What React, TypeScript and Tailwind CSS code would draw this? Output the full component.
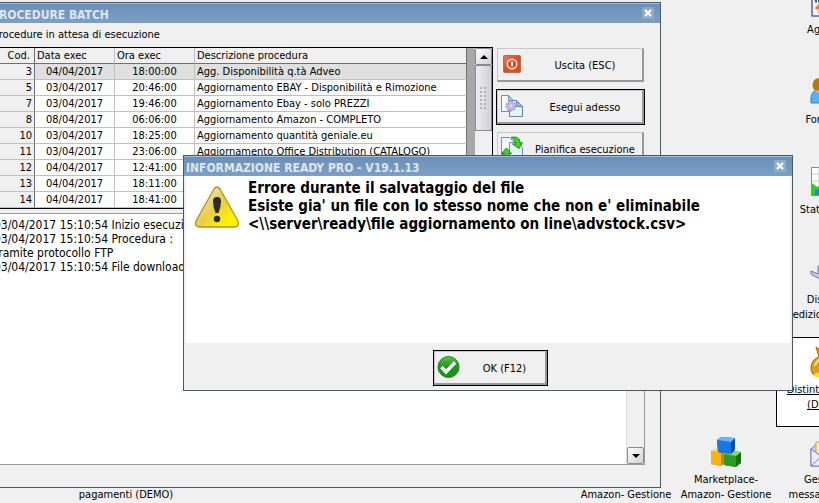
import React from "react";

const desktopItems = [
  { lines: ["Agenda"], icon: "calendar", cell: "col-start-9 row-start-1" },
  { lines: ["Fornitori"], icon: "person", cell: "col-start-9 row-start-2" },
  { lines: ["Statistiche"], icon: "chart", cell: "col-start-9 row-start-3" },
  {
    lines: ["Distinte", "Spedizioni (DEMO)"],
    icon: "plane",
    cell: "col-start-9 row-start-4",
  },
  {
    lines: ["Distinte incasso", "(DEMO)"],
    icon: "moneybag",
    cell: "col-start-9 row-start-5",
    selected: true,
  },
  {
    lines: ["Gestione", "messaggi Ebay"],
    icon: "mail",
    cell: "col-start-9 row-start-6",
  },
  {
    lines: ["Marketplace-", "Amazon- Gestione"],
    icon: "cubes",
    cell: "col-start-8 row-start-6",
  },
  {
    lines: ["\u00a0", "Amazon- Gestione"],
    cell: "col-start-7 row-start-6",
  },
  { lines: ["\u00a0", "pagamenti (DEMO)"], cell: "col-start-2 row-start-6" },
];

const procedures = [
  { code: 3, date: "04/04/2017", time: "18:00:00", description: "Agg. Disponibilità q.tà Adveo" },
  { code: 5, date: "03/04/2017", time: "20:46:00", description: "Aggiornamento EBAY - Disponibilità e Rimozione" },
  { code: 7, date: "03/04/2017", time: "19:46:00", description: "Aggiornamento Ebay - solo PREZZI" },
  { code: 8, date: "08/04/2017", time: "06:06:00", description: "Aggiornamento Amazon - COMPLETO" },
  { code: 10, date: "03/04/2017", time: "18:25:00", description: "Aggiornamento quantità geniale.eu" },
  { code: 11, date: "03/04/2017", time: "23:06:00", description: "Aggiornamento Office Distribution (CATALOGO)" },
  { code: 12, date: "04/04/2017", time: "12:41:00", description: "" },
  { code: 13, date: "04/04/2017", time: "18:11:00", description: "" },
  { code: 14, date: "04/04/2017", time: "18:41:00", description: "" },
];

const log = [
  "03/04/2017 15:10:54 Inizio esecuzione",
  "03/04/2017 15:10:54 Procedura :",
  "tramite protocollo FTP",
  "03/04/2017 15:10:54 File download",
].join("\n");

export default function App() {
  return (
    <div className="relative h-screen overflow-hidden bg-[#f0f0f0] font-['DejaVu_Sans_Condensed','DejaVu_Sans',sans-serif] text-[11px] text-black">
      <Desktop />
      <BatchWindow />
      <ErrorDialog />
    </div>
  );
}

const Desktop = () => {
  return (
    <div className="-mt-[23px] -ml-6 grid auto-rows-[90px] grid-cols-[repeat(9,100px)]">
      {desktopItems.map((item) => (
        <button
          key={item.cell}
          className={`flex flex-col items-center border pt-2 leading-[15px] ${item.cell} ${
            item.selected ? "border-black bg-white underline" : "border-transparent"
          }`}
        >
          <span className="mb-1 flex h-8 w-8 shrink-0 items-center justify-center">
            {item.icon && <DesktopIcon name={item.icon} />}
          </span>
          {item.lines.map((line) => (
            <span key={line} className="whitespace-nowrap">
              {line}
            </span>
          ))}
        </button>
      ))}
    </div>
  );
};

const TitleBar = ({ title }: { title: string }) => {
  return (
    <div className="flex h-5 shrink-0 items-center justify-between border-t border-[#a4c0d8] bg-linear-to-b from-[#6b90b8] to-[#7d9fc4] pr-1.5 pl-0.5">
      <h2 className="pt-0.5 text-xs font-bold whitespace-nowrap text-[#dfe6ee]">
        {title}
      </h2>
      <button
        aria-label="Chiudi"
        className="mb-0.5 flex h-3 w-3 items-center justify-center bg-[#8dacca]"
      >
        <svg viewBox="0 0 8 8" className="h-2 w-2">
          <path d="M1 1l6 6M7 1L1 7" stroke="#fff" strokeWidth="2.2" />
        </svg>
      </button>
    </div>
  );
};

const BatchWindow = () => {
  return (
    <section className="absolute top-[2px] right-[158px] bottom-[15px] -left-[12px] flex flex-col border border-[#4b5866] bg-[#f0f0f0]">
      <TitleBar title="PROCEDURE BATCH" />
      <p className="mt-0.5 mb-0.5 pl-1 leading-5">Procedure in attesa di esecuzione</p>
      <div className="flex h-[162px] shrink-0 pr-[15px]">
        <div className="flex min-w-0 flex-1 border border-black bg-[#a8a8a8]">
          <ProcedureTable />
          <div className="ml-2 flex w-[17px] shrink-0 flex-col bg-[#f0f0f0]">
            <ScrollButton label="Scorri in alto" path="M0 4l4-4 4 4z" />
            <div className="flex h-[66px] items-center justify-center border border-[#8a8a92] bg-linear-to-r from-[#eeeef2] to-[#cfcfd6]">
              <svg viewBox="0 0 7 22" className="h-[22px] w-[7px]" fill="#b4b4bc">
                {[0, 4, 8, 12, 16, 20].map((y) => (
                  <React.Fragment key={y}>
                    <rect x="0" y={y} width="2" height="2" />
                    <rect x="4" y={y} width="2" height="2" />
                  </React.Fragment>
                ))}
              </svg>
            </div>
          </div>
        </div>
        <div className="ml-[3px] flex w-[149px] shrink-0 flex-col gap-1.5">
          <PushButton label="Uscita (ESC)" icon={<PowerIcon />} />
          <PushButton label="Esegui adesso" icon={<RunIcon />} focused />
          <PushButton label="Pianifica esecuzione" icon={<ScheduleIcon />} />
        </div>
      </div>
      <div className="mt-1 mr-[15px] mb-[22px] flex min-h-0 flex-1 border border-[#999] bg-white">
        <textarea
          aria-label="Registro esecuzione"
          readOnly
          value={log}
          className="min-w-0 flex-1 resize-none overflow-hidden pt-1 pl-1 text-xs leading-[14px] whitespace-pre outline-none"
        />
        <div className="flex w-[18px] shrink-0 flex-col justify-end border-l border-[#ddd] bg-[#f0f0f0]">
          <ScrollButton label="Scorri in basso" path="M0 0l4 4 4-4z" />
        </div>
      </div>
    </section>
  );
};

const ProcedureTable = () => {
  return (
    <table className="min-w-0 flex-1 table-fixed border-separate border-spacing-0 bg-white">
      <colgroup>
        <col className="w-[45px]" />
        <col className="w-20" />
        <col className="w-20" />
        <col />
      </colgroup>
      <thead>
        <tr className="h-4 bg-[#f0f0f0] text-left leading-[15px]">
          <th className="border-r border-b border-[#707070] pr-1 text-right font-normal">Cod.</th>
          <th className="border-r border-b border-r-[#c0c0c0] border-b-[#707070] pl-0.5 font-normal">Data exec</th>
          <th className="border-r border-b border-r-[#c0c0c0] border-b-[#707070] pl-0.5 font-normal">Ora exec</th>
          <th className="border-r border-b border-[#707070] pl-0.5 font-normal">Descrizione procedura</th>
        </tr>
      </thead>
      <tbody>
        {procedures.map((procedure, index) => (
          <tr
            key={procedure.code}
            className={`h-4 leading-[15px] ${index === 0 ? "bg-[#e0e0e0]" : "bg-white"}`}
          >
            <td className="border-r border-b border-r-[#707070] border-b-[#c0c0c0] bg-[#f0f0f0] pr-0.5 text-right">
              {procedure.code}
            </td>
            <td className="border-r border-b border-[#c0c0c0] text-center">{procedure.date}</td>
            <td className="border-r border-b border-[#c0c0c0] text-center">{procedure.time}</td>
            <td className="overflow-hidden border-r border-b border-r-[#707070] border-b-[#c0c0c0] pl-0.5 whitespace-nowrap">
              {procedure.description}
            </td>
          </tr>
        ))}
      </tbody>
    </table>
  );
};

const ScrollButton = ({ label, path }: { label: string; path: string }) => {
  return (
    <button
      aria-label={label}
      className="flex h-[17px] w-[17px] shrink-0 items-center justify-center rounded-xs border border-[#8a8a92] bg-linear-to-br from-white to-[#d0d0d6]"
    >
      <svg viewBox="0 0 8 4" className="h-1 w-2">
        <path d={path} />
      </svg>
    </button>
  );
};

const PushButton = ({
  label,
  icon,
  focused,
}: {
  label: string;
  icon: React.ReactNode;
  focused?: boolean;
}) => {
  return (
    <button
      className={`flex h-9 w-full shrink-0 items-center border bg-[#f0f0f0] ${
        focused ? "border-black" : "border-transparent"
      }`}
    >
      <span className="flex h-full w-full items-center border-t border-r-2 border-b-2 border-l border-t-[#c8c8cc] border-r-[#98989c] border-b-[#98989c] border-l-[#c8c8cc] pl-0.5">
        <span className="mb-0.5 flex h-6 w-6 shrink-0 items-center justify-center">
          {icon}
        </span>
        <span className="flex-1 pt-1 pl-1 text-center whitespace-nowrap">{label}</span>
      </span>
    </button>
  );
};

const ErrorDialog = () => {
  return (
    <section
      role="dialog"
      aria-label="Informazione"
      className="absolute top-[155px] right-[26px] left-[183px] flex flex-col border border-[#4b5866] bg-[#f0f0f0]"
    >
      <TitleBar title="INFORMAZIONE READY PRO - V19.1.13" />
      <div className="mx-0.5 flex h-[167px] bg-white pt-[3px]">
        <WarningIcon />
        <p className="ml-2 text-[15px] leading-[18px] font-bold whitespace-nowrap">
          Errore durante il salvataggio del file
          <br />
          Esiste gia' un file con lo stesso nome che non e' eliminabile
          <br />
          &lt;\\server\ready\file aggiornamento on line\advstock.csv&gt;
        </p>
      </div>
      <div className="flex justify-center pt-[7px] pb-1">
        <div className="ml-1 w-[115px]">
          <PushButton label="OK (F12)" icon={<OkIcon />} focused />
        </div>
      </div>
    </section>
  );
};

const WarningIcon = () => (
  <svg viewBox="0 0 46 42" className="mt-[7px] ml-2 h-[42px] w-[46px] shrink-0">
    <defs>
      <linearGradient id="warn" x1="0" y1="0" x2="1" y2="1">
        <stop offset="0.2" stopColor="#e9dfae" />
        <stop offset="0.5" stopColor="#e6cf45" />
        <stop offset="0.8" stopColor="#fff200" />
      </linearGradient>
    </defs>
    <path
      d="M20 3Q23-1 26 3L44 35Q46 40 41 41H5Q0 40 2 35Z"
      fill="url(#warn)"
      stroke="#bd8d1d"
      strokeWidth="1.3"
    />
    <path d="M19 15Q19 11 23 11T27 15Q27 21 24.5 27H21.5Q19 21 19 15Z" fill="#2b2b24" />
    <circle cx="23" cy="33" r="3.2" fill="#2b2b24" />
  </svg>
);

const OkIcon = () => (
  <svg viewBox="0 0 24 24" className="h-6 w-6">
    <defs>
      <linearGradient id="ok" x1="0" y1="0" x2="0" y2="1">
        <stop offset="0" stopColor="#5fc04c" />
        <stop offset="0.5" stopColor="#1d9420" />
        <stop offset="1" stopColor="#0d9b10" />
      </linearGradient>
    </defs>
    <circle cx="11.5" cy="12" r="10.5" fill="url(#ok)" stroke="#2c7a28" />
    <path d="M4.5 12l4.500 5 9-9.500" fill="none" stroke="#fff" strokeWidth="3.4" />
  </svg>
);

const PowerIcon = () => (
  <svg viewBox="0 0 18 18" className="h-[18px] w-[18px]">
    <defs>
      <linearGradient id="power" x1="0" y1="0" x2="1" y2="1">
        <stop offset="0" stopColor="#d98068" />
        <stop offset="0.5" stopColor="#dd4823" />
        <stop offset="1" stopColor="#f04a18" />
      </linearGradient>
    </defs>
    <rect x="0.5" y="0.5" width="17" height="17" rx="1" fill="url(#power)" stroke="#c0694f" />
    <circle cx="9" cy="9" r="4.8" fill="none" stroke="#fbe6dc" strokeWidth="1.5" />
    <path d="M9 6.500v5" stroke="#fff" strokeWidth="1.7" />
  </svg>
);

const RunIcon = () => (
  <svg viewBox="0 0 24 24" className="h-6 w-6">
    <path d="M1.5 1.5h7l5 5v11h-12z" fill="#f5f9ff" stroke="#6d8fbe" />
    <path d="M8.5 1.5v5h5z" fill="#a9cdf0" stroke="#6d8fbe" />
    <path d="M9.5 6.5h7l6 6v10h-13z" fill="#e7f1fd" stroke="#5f86bd" />
    <path d="M16.5 6.5v6h6z" fill="#8dbdec" stroke="#5f86bd" />
    <circle cx="11" cy="12" r="4.6" fill="#bdbcdc" stroke="#a3a1c6" strokeWidth="1.6" strokeDasharray="2 1" />
    <circle cx="11" cy="12" r="1.4" fill="#dcdcf2" />
  </svg>
);

const ScheduleIcon = () => (
  <svg viewBox="0 0 24 24" className="h-6 w-6">
    <path d="M1.5 1.5h8l5 5v12h-13z" fill="#f5f9ff" stroke="#6d8fbe" />
    <path d="M9.5 6.5h8l5 5v11h-13z" fill="#e7f1fd" stroke="#6d8fbe" />
    <path d="M11 1.5c6-1.500 9 1 9 5.500l2.500-.500-3.500 6-6.500-4.500h3c0-3-2-5-4.500-6.500z" fill="#47cf2c" stroke="#1f8d16" />
    <path d="M6.5 12l5 5.500H9V23H4v-5.500H1.500z" fill="#3ed028" stroke="#1f8d16" />
  </svg>
);

const DesktopIcon = ({ name }: { name: string }) => {
  return (
    <svg viewBox="0 0 32 32" className="h-8 w-8">
      {name === "calendar" && (
        <>
          <rect x="2" y="2" width="27" height="28" fill="#f4f4ff" stroke="#5f5fae" strokeWidth="1.5" />
          <path d="M5 15h21" stroke="#555" strokeWidth="3" strokeDasharray="2 1" />
          <path d="M6 23l4-4v9" fill="none" stroke="#ee7a1c" strokeWidth="3" />
        </>
      )}
      {name === "person" && (
        <>
          <path d="M1 27V21q1-6 6-7h13q7 2 8 13z" fill="#58b0f5" stroke="#2386d8" />
          <circle cx="11" cy="10" r="7.5" fill="#fbb45c" />
          <path d="M3 12Q1 2 11 2q9 0 9 7-8-2-11 1v4q-4 2-6-2z" fill="#b27a10" />
        </>
      )}
      {name === "chart" && (
        <>
          <rect x="1.5" y="1.5" width="29" height="28" fill="#fff" stroke="#8a8a98" />
          <path d="M2 8h28M2 15h28M9 2v27M17 2v27" stroke="#c9c9d6" />
          <path d="M2 17l5 4 5-3v12H2z" fill="#2fce2b" />
          <path d="M5 24l5-1v6H5z" fill="#2781dd" />
        </>
      )}
      {name === "plane" && (
        <path d="M1 15l7 3V10h4v9l16 3v4l-16-2-10-5q-2-2-1-4z" fill="#c9c9e6" stroke="#77779f" />
      )}
      {name === "moneybag" && (
        <>
          <path d="M6 1l6 4 4-3 3 3-5 6q13 6 12 14-2 7-14 6Q0 31 1 21q1-8 8-10z" fill="#dc9c1c" stroke="#a46b05" />
          <path d="M5 20q1-5 6-7" fill="none" stroke="#ffdf7d" strokeWidth="2" />
          <ellipse cx="9" cy="29" rx="5" ry="2.5" fill="#ffdf1c" />
        </>
      )}
      {name === "mail" && (
        <>
          <path d="M1 13L13 2l17 11v17H1z" fill="#c9c9fa" stroke="#7878c8" />
          <path d="M6 6h20v16H6z" fill="#ffe9b5" stroke="#caa870" />
          <path d="M1 13l14 10 15-10v17H1z" fill="#ededff" stroke="#7878c8" />
          <path d="M1 30l11-10" stroke="#7878c8" />
        </>
      )}
      {name === "cubes" && (
        <>
          <path d="M1 15l3-2 10 1v14l-3 2-10-2z" fill="#c98705" />
          <path d="M1 15l10 1v14l-10-2z" fill="#f5b414" />
          <path d="M1 15l3-2 10 1-3 2z" fill="#ffe27a" />
          <path d="M14 18l4-3 13 1v11l-5 4-12-2z" fill="#14720f" />
          <path d="M14 18l12 2v11l-12-2z" fill="#2b9c22" />
          <path d="M14 18l4-3 13 1-5 4z" fill="#7ede65" />
          <path d="M7 4l4-3 14 1v12l-4 4-13-2z" fill="#0b4fae" />
          <path d="M7 4l14 2v12l-13-2z" fill="#1976e4" />
          <path d="M7 4l4-3 14 1-4 4z" fill="#6db7ff" />
        </>
      )}
    </svg>
  );
};
